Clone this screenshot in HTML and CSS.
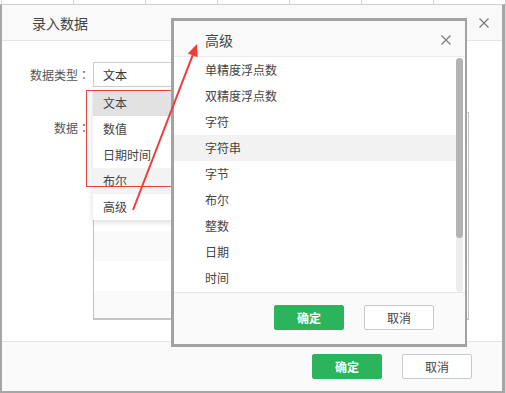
FILE: index.html
```html
<!DOCTYPE html>
<html>
   <head>
      <title>录入数据</title>
      <link rel="stylesheet" href="styles.css">
   </head>
   <body>
      <div class="modal">
         <div class="modal-header">
            <span class="modal-title">录入数据</span>
            <svg class="close-icon" width="10" height="10" viewBox="0 0 10 10"><path d="M0.5 0.5L9.5 9.5M9.5 0.5L0.5 9.5"/></svg>
         </div>
         <div class="modal-body">
            <div class="form-row">
               <label class="form-label">数据类型<span class="colon">：</span></label>
               <div class="select-wrap">
                  <div class="select-box">文本</div>
                  <ul class="dropdown">
                     <li class="selected">文本</li>
                     <li>数值</li>
                     <li>日期时间</li>
                     <li class="hover">布尔</li>
                     <li>高级</li>
                  </ul>
               </div>
            </div>
            <div class="form-row data-row">
               <label class="form-label top">数据<span class="colon">：</span></label>
               <div class="data-grid"></div>
            </div>
         </div>
         <div class="modal-footer">
            <button class="btn btn-ok">确定</button>
            <button class="btn btn-cancel">取消</button>
         </div>
      </div>

      <div class="mark-box"></div>

      <div class="picker">
         <div class="picker-header">
            <span class="picker-title">高级</span>
            <svg class="close-icon" width="10" height="10" viewBox="0 0 10 10"><path d="M0.5 0.5L9.5 9.5M9.5 0.5L0.5 9.5"/></svg>
         </div>
         <div class="picker-body">
            <ul class="picker-list">
               <li>单精度浮点数</li>
               <li>双精度浮点数</li>
               <li>字符</li>
               <li class="hover">字符串</li>
               <li>字节</li>
               <li>布尔</li>
               <li>整数</li>
               <li>日期</li>
               <li>时间</li>
            </ul>
            <div class="scroll-track"><div class="scroll-thumb"></div></div>
         </div>
         <div class="picker-footer">
            <button class="btn btn-ok">确定</button>
            <button class="btn btn-cancel">取消</button>
         </div>
      </div>

      <svg class="arrow" width="506" height="393" viewBox="0 0 506 393">
         <line x1="133" y1="210" x2="192.7" y2="55.2"/>
         <polygon points="197,44 197.6,57.2 187.8,53.4"/>
      </svg>
   </body>
</html>
```

FILE: styles.css
```css
* {
   margin: 0;
   padding: 0;
   box-sizing: border-box;
   font-family: "Noto Sans CJK SC", "Liberation Sans", sans-serif;
}
body {
   position: relative;
   width: 506px;
   height: 393px;
   overflow: hidden;
   background-color: #ffffff;
   background-image: linear-gradient(to right, #d6d6d6 1px, transparent 1px);
   background-size: 72px 100%;
   background-position: 1px 0;
   padding-top: 4px;
   color: #333333;
}
ul {
   list-style: none;
}
.modal {
   width: 505px;
   height: 389px;
   background: #ffffff;
   border: 2px solid #a6a6a6;
   border-top: 1px solid #cfcfcf;
   border-right-width: 3px;
   display: flex;
   flex-direction: column;
}
.modal-header {
   height: 36px;
   flex: none;
   background: #f9f9f9;
   border-bottom: 1px solid #e6e6e6;
   display: flex;
   align-items: center;
   justify-content: space-between;
   padding: 0 13px 0 30px;
}
.modal-title {
   font-size: 14px;
   color: #444444;
}
.close-icon path {
   stroke: #7a7a7a;
   stroke-width: 1.2;
   fill: none;
}
.modal-body {
   height: 300px;
   flex: none;
   padding-top: 21px;
}
.form-row {
   display: flex;
}
.form-label {
   width: 88px;
   flex: none;
   text-align: right;
   font-size: 12px;
   line-height: 25px;
   color: #555555;
   margin-right: 3px;
}
.form-label .colon {
   font-family: "Noto Sans CJK TC", sans-serif;
}
.form-label.top {
   line-height: 16px;
   padding-top: 8px;
}
.select-wrap {
   position: relative;
   z-index: 2;
}
.select-box {
   width: 360px;
   height: 25px;
   border: 1px solid #cccccc;
   font-size: 12px;
   line-height: 23px;
   padding-left: 9px;
   color: #333333;
}
.dropdown {
   position: absolute;
   top: 28px;
   left: 0;
   width: 180px;
   background: #ffffff;
   box-shadow: 0 2px 6px rgba(0, 0, 0, 0.15);
}
.dropdown li {
   height: 26px;
   line-height: 26px;
   font-size: 12px;
   padding-left: 10px;
   color: #444444;
}
.dropdown li.selected {
   background: #e2e2e2;
}
.dropdown li.hover {
   background: #f3f3f3;
}
.data-row {
   margin-top: 25px;
}
.data-grid {
   width: 376px;
   height: 208px;
   border: 1px solid #c4c4c4;
   border-bottom-width: 2px;
   background: repeating-linear-gradient(#fafafa 0 30px, #ffffff 30px 60px);
   background-position: 0 -2px;
}
.modal-footer {
   flex: 1;
   background: #fafafa;
   border-top: 1px solid #e6e6e6;
   display: flex;
   justify-content: flex-end;
   align-items: flex-start;
   gap: 20px;
   padding: 12px 30px 0 0;
}
.btn {
   width: 70px;
   height: 25px;
   border-radius: 2px;
   font-size: 12px;
   cursor: pointer;
}
.btn-ok {
   background: #2bb45b;
   border: 1px solid #2bb45b;
   color: #ffffff;
   font-weight: bold;
}
.btn-cancel {
   background: #ffffff;
   border: 1px solid #c9c9c9;
   color: #444444;
}
.mark-box {
   position: absolute;
   left: 86px;
   top: 90px;
   width: 120px;
   height: 97px;
   border: 1px solid #e8413d;
   z-index: 3;
}
.picker {
   position: absolute;
   left: 171px;
   top: 18px;
   width: 296px;
   height: 329px;
   background: #ffffff;
   border: 3px solid #a2a2a2;
   border-right-width: 2px;
   display: flex;
   flex-direction: column;
   z-index: 4;
}
.picker-header {
   height: 36px;
   flex: none;
   background: #fafafa;
   border-bottom: 1px solid #ebebeb;
   display: flex;
   align-items: center;
   justify-content: space-between;
   padding: 2px 14px 0 31px;
}
.picker-title {
   font-size: 14px;
   color: #444444;
}
.picker-body {
   height: 235px;
   flex: none;
   display: flex;
   overflow: hidden;
}
.picker-list {
   flex: 1;
}
.picker-list li {
   height: 26px;
   line-height: 26px;
   font-size: 12px;
   padding-left: 31px;
   color: #444444;
}
.picker-list li.hover {
   background: #f2f2f2;
}
.scroll-track {
   width: 7px;
   height: 234px;
   margin: 1px 2px 0 0;
   background: #ededed;
   border-radius: 4px;
}
.scroll-thumb {
   height: 180px;
   background: #b3b3b3;
   border-radius: 4px;
}
.picker-footer {
   flex: 1;
   background: #fafafa;
   border-top: 1px solid #e6e6e6;
   display: flex;
   justify-content: flex-end;
   align-items: flex-start;
   gap: 20px;
   padding: 12px 31px 0 0;
}
.arrow {
   position: absolute;
   left: 0;
   top: 0;
   z-index: 5;
}
.arrow line {
   stroke: #ef3d3d;
   stroke-width: 2;
}
.arrow polygon {
   fill: #ef3d3d;
}
```
